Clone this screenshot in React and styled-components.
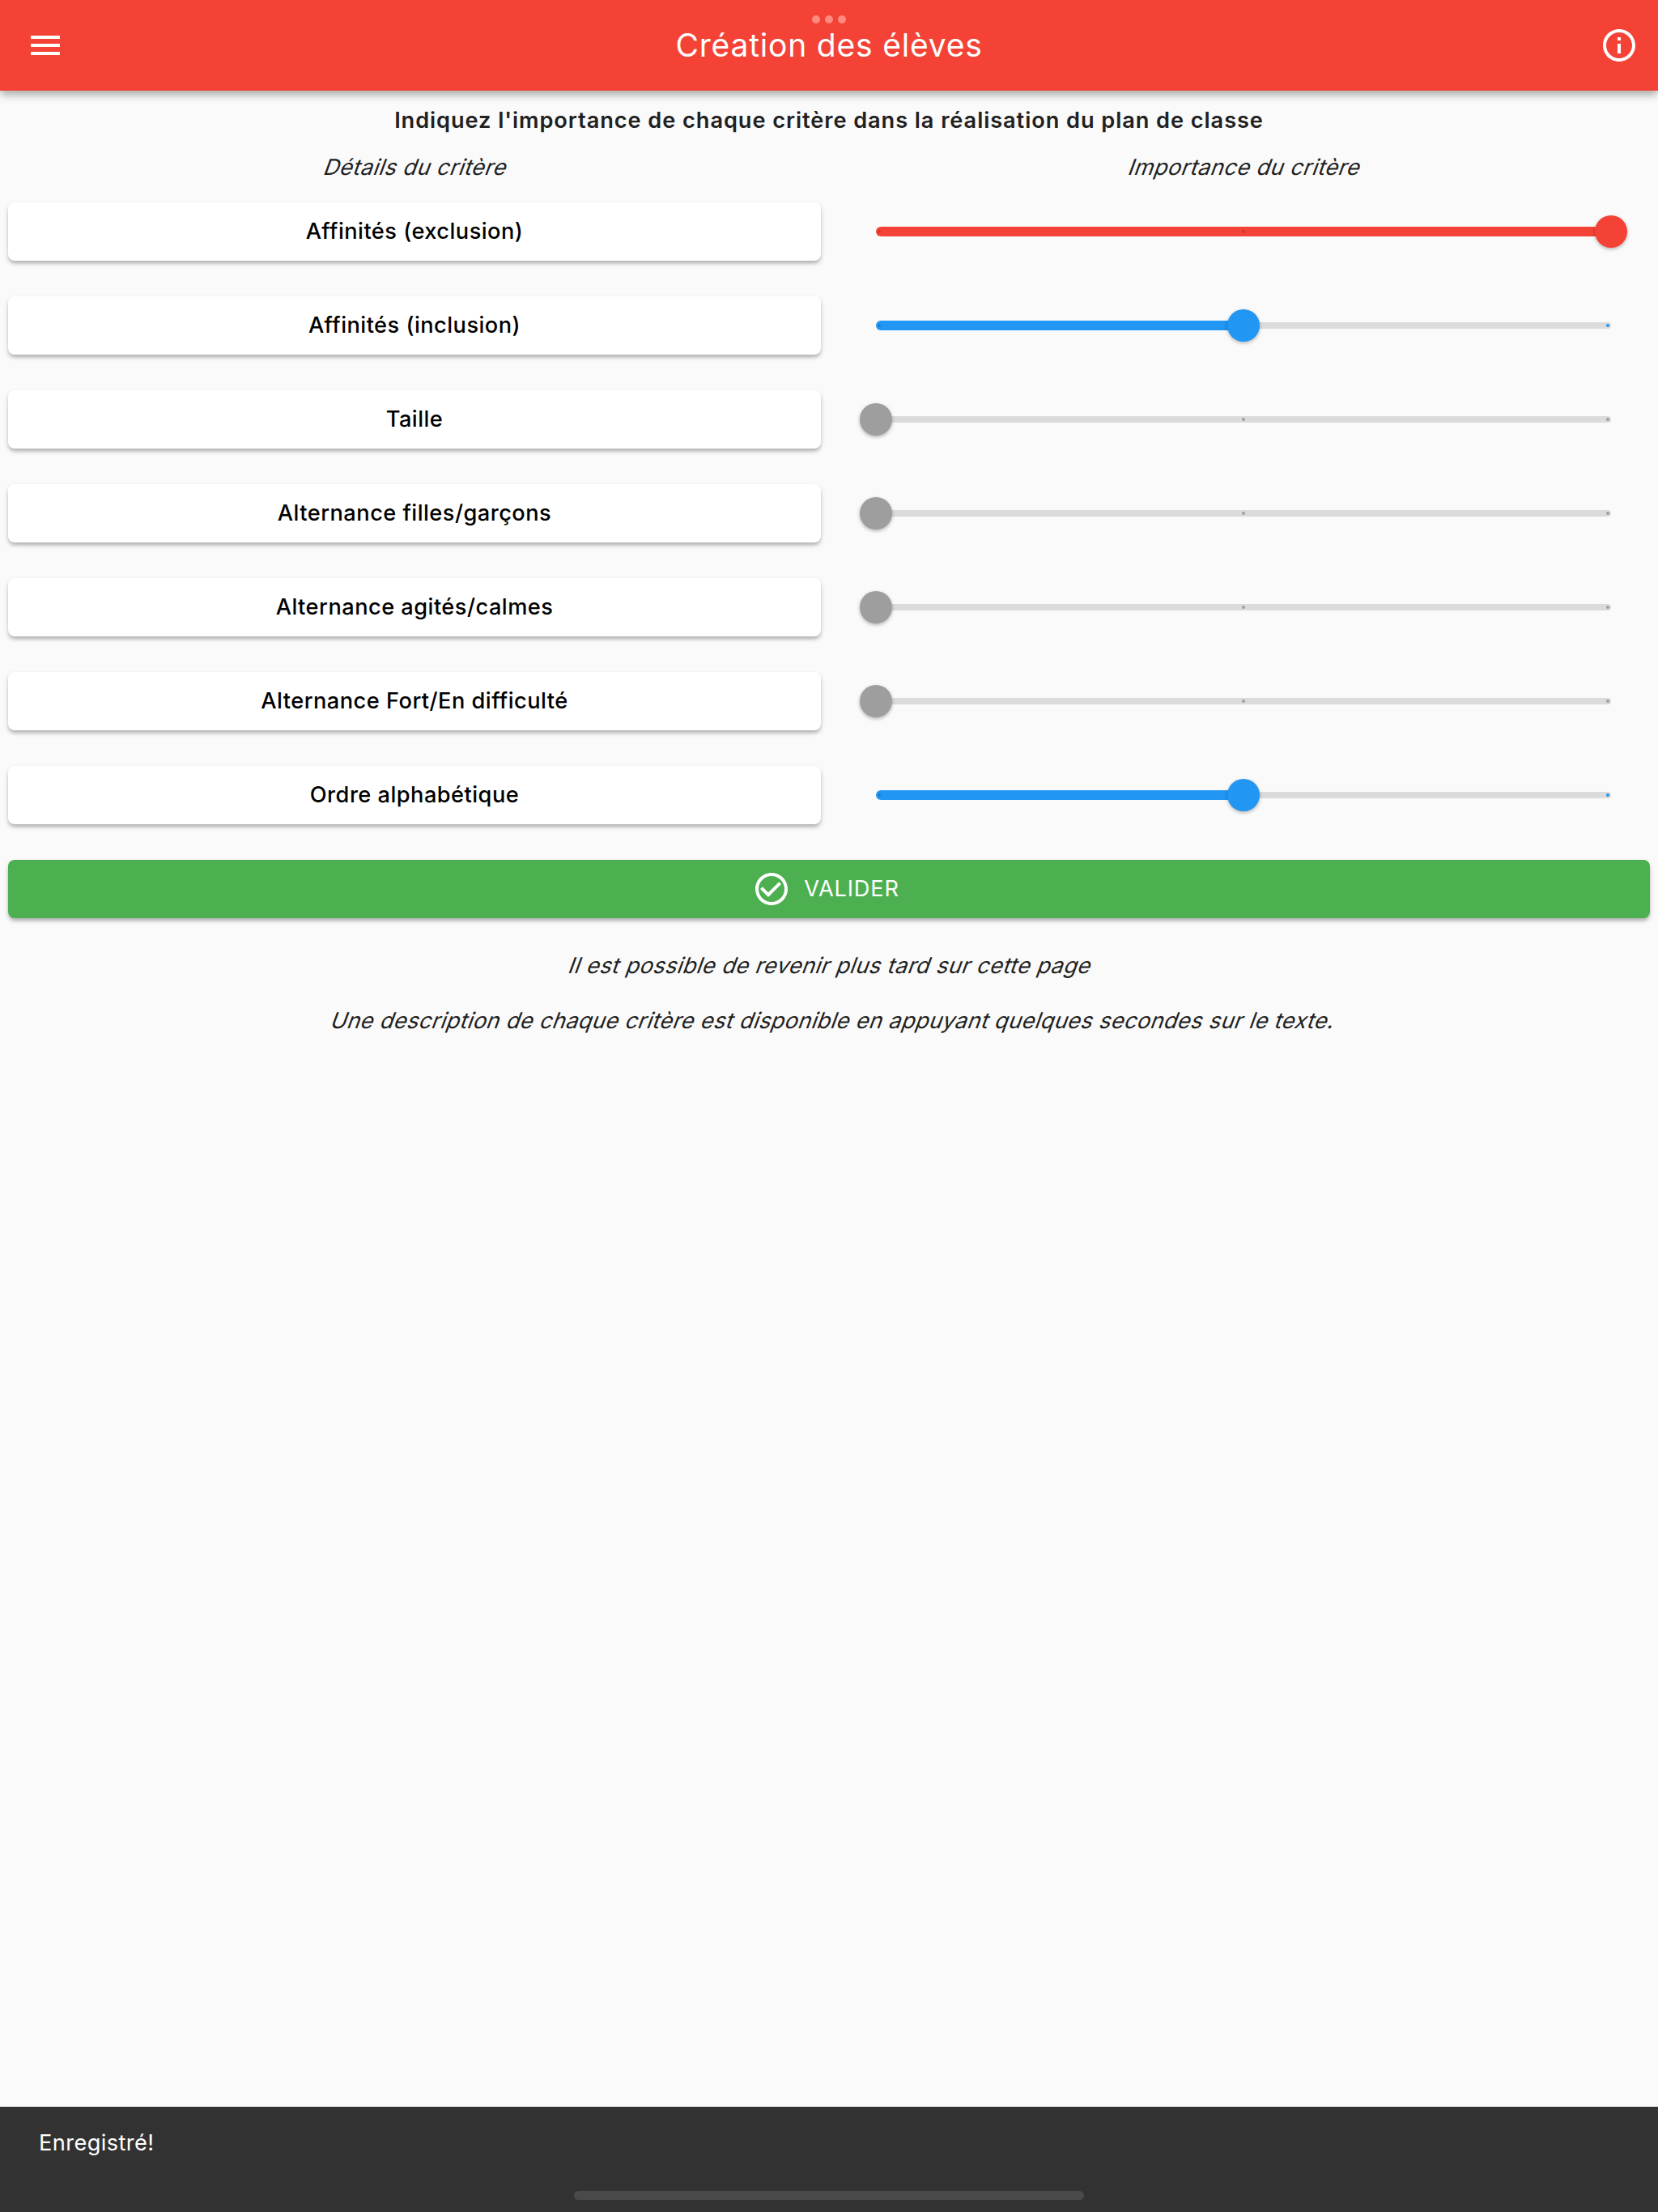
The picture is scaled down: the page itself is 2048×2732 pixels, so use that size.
import React from "react";
import styled, { createGlobalStyle } from "styled-components";

const GlobalStyle = createGlobalStyle`
  * { box-sizing: border-box; }
  body {
    margin: 0;
    background: #fafafa;
    font-family: Inter, "Liberation Sans", sans-serif;
    font-size: 27.2px;
    color: #212121;
  }
`;

const Screen = styled.div`
  width: 2048px;
  height: 2732px;
  display: flex;
  flex-direction: column;
  background: #fafafa;
  overflow: hidden;
`;

const AppBar = styled.header`
  position: relative;
  flex: none;
  height: 112px;
  display: flex;
  align-items: center;
  justify-content: space-between;
  padding: 0 24px 0 32px;
  background: #f44336;
  color: #fff;
  box-shadow: 0 6px 8px -1px rgba(0, 0, 0, 0.2), 0 6px 12px rgba(0, 0, 0, 0.12);
`;

const Title = styled.h1`
  margin: 0 8px 0 0;
  font-size: 39px;
  font-weight: 400;
  line-height: 48px;
  letter-spacing: 0.8px;
  white-space: nowrap;
`;

const Multitask = styled.div`
  position: absolute;
  top: 19px;
  left: 1003px;
  display: flex;
  gap: 6px;
`;

const Dot = styled.i`
  width: 10px;
  height: 10px;
  border-radius: 50%;
  background: #ff8a80;
`;

const Icon = styled.svg`
  flex: none;
  width: 48px;
  height: 48px;
  fill: #fff;
`;

const Content = styled.main`
  flex: 1;
  display: flex;
  flex-direction: column;
  padding: 19px 10px 0;
`;

const Heading = styled.h2`
  margin: 0;
  font-size: 27.2px;
  line-height: 36px;
  font-weight: 600;
  letter-spacing: 0.93px;
  text-align: center;
  white-space: nowrap;
`;

const Columns = styled.div`
  display: grid;
  grid-template-columns: 1004px 1fr;
  gap: 20px;
`;

const ColumnTitles = styled(Columns)`
  margin-top: 22px;
`;

const Slanted = styled.p`
  margin: 0;
  padding-left: ${(p) => p.$indent || "0"};
  line-height: 36px;
  letter-spacing: ${(p) => p.$spacing || "0.42px"};
  text-align: center;
  white-space: nowrap;
  transform: skewX(-20deg);
  transform-origin: 50% 24px;
`;

const Criteria = styled(Columns)`
  margin-top: 13px;
  grid-auto-rows: 96px;
  align-items: center;
`;

const Raised = styled.button`
  height: 72px;
  display: flex;
  align-items: center;
  justify-content: center;
  gap: 16px;
  padding: 0;
  border: 0;
  border-radius: 8px;
  background: ${(p) => p.$bg || "#fff"};
  color: ${(p) => p.$fg || "#000"};
  font: ${(p) => p.$weight || 500} 27.2px/36px Inter, "Liberation Sans", sans-serif;
  letter-spacing: ${(p) => p.$spacing || "0.48px"};
  white-space: nowrap;
  box-shadow: 0 4px 4px -1px rgba(0, 0, 0, 0.18), 0 3px 6px rgba(0, 0, 0, 0.16);
`;

const Slider = styled.div`
  position: relative;
  height: 40px;
  margin: 0 48px;
  display: flex;
  align-items: center;
`;

const Active = styled.div`
  height: 12px;
  border-radius: 6px 0 0 6px;
  background: ${(p) => p.$color};
`;

const Inactive = styled.div`
  flex: 1;
  height: 8px;
  border-radius: 0 4px 4px 0;
  background: #dbdbdb;
`;

const Tick = styled.i`
  position: absolute;
  top: 18px;
  width: 4px;
  height: 4px;
  border-radius: 50%;
  background: ${(p) => p.$color};
`;

const Thumb = styled.i`
  position: absolute;
  top: 0;
  width: 40px;
  height: 40px;
  margin-left: -20px;
  border-radius: 50%;
  background: ${(p) => p.$color};
  box-shadow: 0 2px 4px rgba(0, 0, 0, 0.22), 0 1px 5px rgba(0, 0, 0, 0.08);
`;

const Submit = styled(Raised)`
  margin-top: 32px;
  padding-right: 8px;
  flex: none;
`;

const Notes = styled.div`
  margin-top: 41px;
  display: flex;
  flex-direction: column;
  gap: 32px;
`;

const SnackBar = styled.footer`
  flex: none;
  height: 130px;
  display: flex;
  flex-direction: column;
  justify-content: space-between;
  padding: 27px 48px 15px;
  background: #323232;
  color: #fff;
  line-height: 36px;
`;

const SnackText = styled.span`
  letter-spacing: 0.4px;
`;

const HomeIndicator = styled.div`
  align-self: center;
  width: 630px;
  height: 11px;
  border-radius: 6px;
  background: #4a4a4a;
`;

const LEVELS = ["#9e9e9e", "#2196f3", "#f44336"];

const CRITERIA = [
  { label: "Affinités (exclusion)", level: 2 },
  { label: "Affinités (inclusion)", level: 1 },
  { label: "Taille", level: 0 },
  { label: "Alternance filles/garçons", level: 0 },
  { label: "Alternance agités/calmes", level: 0 },
  { label: "Alternance Fort/En difficulté", level: 0 },
  { label: "Ordre alphabétique", level: 1 },
];

const TICKS = ["2px", "calc(50% - 2px)", "calc(100% - 6px)"];

function Importance({ level }) {
  const color = LEVELS[level];
  const place = `${level * 50}%`;
  return (
    <Slider>
      <Active $color={color} style={{ width: place }} />
      <Inactive />
      {TICKS.map((left, i) => (
        <Tick key={left} $color={i < level ? "rgba(0,0,0,0.16)" : color} style={{ left }} />
      ))}
      <Thumb $color={color} style={{ left: place }} />
    </Slider>
  );
}

export default function App() {
  return (
    <Screen>
      <GlobalStyle />
      <AppBar>
        <Icon viewBox="0 0 24 24">
          <path d="M3 18h18v-2H3v2zm0-5h18v-2H3v2zm0-7v2h18V6H3z" />
        </Icon>
        <Title>Création des élèves</Title>
        <Icon viewBox="0 0 24 24">
          <path d="M11 7h2v2h-2zm0 4h2v6h-2zm1-9C6.48 2 2 6.48 2 12s4.48 10 10 10 10-4.48 10-10S17.52 2 12 2zm0 18c-4.41 0-8-3.59-8-8s3.59-8 8-8 8 3.59 8 8-3.59 8-8 8z" />
        </Icon>
        <Multitask>
          <Dot />
          <Dot />
          <Dot />
        </Multitask>
      </AppBar>
      <Content>
        <Heading>Indiquez l'importance de chaque critère dans la réalisation du plan de classe</Heading>
        <ColumnTitles>
          <Slanted>Détails du critère</Slanted>
          <Slanted>Importance du critère</Slanted>
        </ColumnTitles>
        <Criteria>
          {CRITERIA.map((c) => (
            <React.Fragment key={c.label}>
              <Raised>{c.label}</Raised>
              <Importance level={c.level} />
            </React.Fragment>
          ))}
        </Criteria>
        <Submit $bg="#4caf50" $fg="#fff" $weight={400} $spacing="0.8px">
          <Icon viewBox="0 0 24 24">
            <path d="M16.59 7.58L10 14.17l-3.59-3.58L5 12l5 5 8-8zM12 2C6.48 2 2 6.48 2 12s4.48 10 10 10 10-4.48 10-10S17.52 2 12 2zm0 18c-4.42 0-8-3.58-8-8s3.58-8 8-8 8 3.58 8 8-3.58 8-8 8z" />
          </Icon>
          VALIDER
        </Submit>
        <Notes>
          <Slanted>Il est possible de revenir plus tard sur cette page</Slanted>
          <Slanted $spacing="0.35px" $indent="7px">
            Une description de chaque critère est disponible en appuyant quelques secondes sur le texte.
          </Slanted>
        </Notes>
      </Content>
      <SnackBar>
        <SnackText>Enregistré!</SnackText>
        <HomeIndicator />
      </SnackBar>
    </Screen>
  );
}
